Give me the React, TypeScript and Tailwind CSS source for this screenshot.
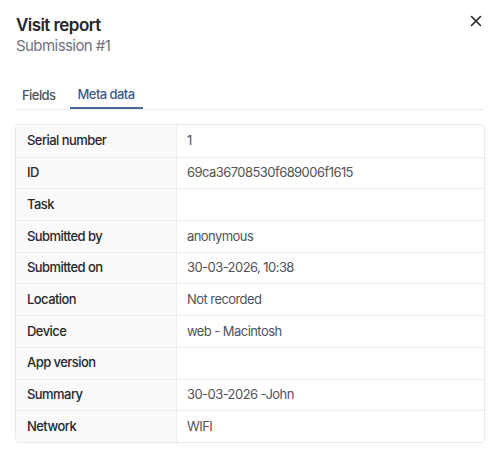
import React from "react";

const rows: [string, string][] = [
  ["Serial number", "1"],
  ["ID", "69ca36708530f689006f1615"],
  ["Task", ""],
  ["Submitted by", "anonymous"],
  ["Submitted on", "30-03-2026, 10:38"],
  ["Location", "Not recorded"],
  ["Device", "web - Macintosh"],
  ["App version", ""],
  ["Summary", "30-03-2026 -John"],
  ["Network", "WIFI"],
];

export default function App() {
  return (
    <div
      className="w-[500px] h-[458px] bg-white relative tracking-[-0.035em]"
      style={{ fontFamily: "Inter, 'Noto Sans', sans-serif" }}
    >
      <div className="pt-[15px] px-[16px]">
        <h1 className="text-[17px] leading-[20px] font-semibold text-[#27272a]">Visit report</h1>
        <p className="text-[15px] leading-[20px] text-[#71717a] mt-[1px]">Submission #1</p>
      </div>
      <button className="absolute top-[13px] right-[16px] w-[16px] h-[16px] flex items-center justify-center text-[#27272a]">
        <svg width="12" height="12" viewBox="0 0 12 12" fill="none" stroke="currentColor" strokeWidth="1.6" strokeLinecap="round">
          <path d="M1.5 1.5L10.5 10.5M10.5 1.5L1.5 10.5" />
        </svg>
      </button>
      <div className="mx-[15px] mt-[26px] flex border-b border-[#ececec] h-[28px]">
        <div className="px-[7px] h-full flex items-center text-[13px] font-medium text-[#52525b]">Fields</div>
        <div className="ml-[7px] px-[8px] h-full flex items-center text-[13px] font-medium text-[#3c5a8c] border-b-2 border-[#4a6796] mb-[-1px]">Meta data</div>
      </div>
      <div className="mx-[15px] mt-[14px] border border-[#e9e9e9] rounded-[4px] overflow-hidden">
        {rows.map(([k, v], i) => (
          <div key={k} className={`flex h-[31.7px] ${i > 0 ? "border-t border-[#ececec]" : ""}`}>
            <div className="w-[161px] shrink-0 bg-[#fafafa] border-r border-[#ececec] flex items-center pl-[11px] text-[13px] font-medium text-[#27272a]">{k}</div>
            <div className="flex-1 flex items-center pl-[10px] text-[13px] text-[#52525b]">{v}</div>
          </div>
        ))}
      </div>
    </div>
  );
}
